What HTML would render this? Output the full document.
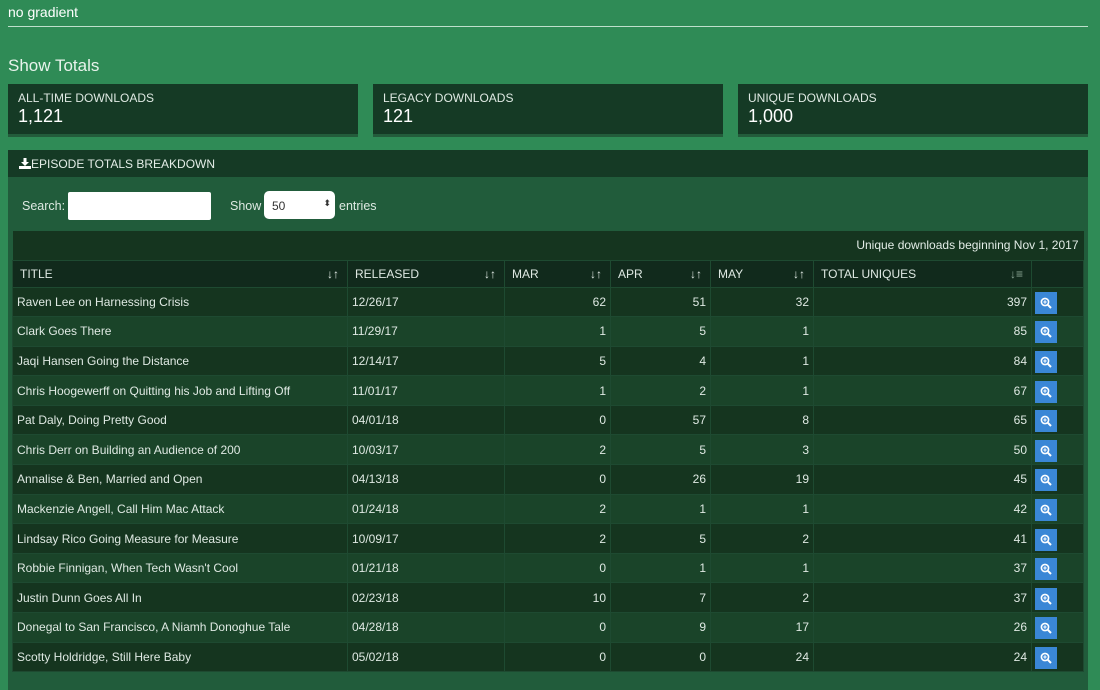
<!DOCTYPE html>
<html><head><meta charset="utf-8"><style>
*{box-sizing:border-box;margin:0;padding:0}
body{width:1100px;height:681px;overflow:hidden;background:#2f8b56;font-family:"Liberation Sans",sans-serif;color:#fff;position:relative}
.t{position:absolute;left:8px;top:4px;font-size:14px}
.hr{position:absolute;left:8px;top:26px;width:1080px;height:1px;background:#bfe0cc}
.st{position:absolute;left:8px;top:56px;font-size:17px;color:#e8f3ec}
.card{position:absolute;top:84px;height:50px;background:#153a25;box-shadow:0 3px 0 #235c3b;padding:7px 10px}
.card .l{font-size:12px;color:#dfe9e3}
.card .v{font-size:18px;margin-top:1px}
.panel{position:absolute;left:8px;top:150px;width:1080px;height:540px;background:#215c3b}
.ph{height:27px;background:#153a25;font-size:12px;padding:7px 11px;color:#e4ede7}
.ctrl{position:absolute;top:49px;font-size:12.5px;color:#dde9e2}
.inp{position:absolute;background:#fff;border-radius:2px}
table{position:absolute;left:4px;top:81px;width:1072px;border-collapse:collapse;font-size:12px;color:#dfe9e3}
td,th{border:1px solid #1e4a31;padding:0 4px;height:29.6px;font-weight:normal;text-align:left;white-space:nowrap}
tr.cap td{background:#173e28;text-align:right;height:29px;border:none;color:#e2ece6}
th{background:#112a1c;height:27px;position:relative;font-size:12px;padding:0 7px}
th span{position:absolute;right:8px;top:6px;font-size:12px;font-weight:bold}
tbody tr:nth-child(odd) td{background:#15351f}
tbody tr:nth-child(even) td{background:#1a4429}
td.n{text-align:right}
.b{display:inline-block;width:22px;height:22px;background:#3a87d6;vertical-align:middle;position:relative;top:1px;margin-left:-1px}
.b svg{position:absolute;left:5px;top:5px}
</style></head><body>
<div class="t">no gradient</div><div class="hr"></div>
<div class="st">Show Totals</div>
<div class="card" style="left:8px;width:350px"><div class="l">ALL-TIME DOWNLOADS</div><div class="v">1,121</div></div>
<div class="card" style="left:373px;width:350px"><div class="l">LEGACY DOWNLOADS</div><div class="v">121</div></div>
<div class="card" style="left:738px;width:350px"><div class="l">UNIQUE DOWNLOADS</div><div class="v">1,000</div></div>
<div class="panel">
<div class="ph"><svg width="12" height="11" viewBox="0 0 12 11" style="vertical-align:-1px"><path d="M4.5 0h3v4h2.5L6 8 2 4h2.5z" fill="#fff"/><rect x="0" y="8" width="12" height="3" fill="#fff"/></svg>EPISODE TOTALS BREAKDOWN</div>
<div class="ctrl" style="left:14px">Search:</div>
<div class="inp" style="left:60px;top:42px;width:143px;height:28px"></div>
<div class="ctrl" style="left:222px">Show</div>
<div class="inp" style="left:256px;top:41px;width:71px;height:28px;border-radius:5px;color:#333;font-size:12px;padding:8px 8px">50<span style="position:absolute;right:4px;top:7px;font-size:9px">&#x2B0D;</span></div>
<div class="ctrl" style="left:331px">entries</div>
<table>
<tr class="cap"><td colspan="7" style="padding-right:5px">Unique downloads beginning Nov 1, 2017</td></tr>
<tr><th style="width:335px">TITLE<span>&#8595;&#8593;</span></th><th style="width:157px">RELEASED<span>&#8595;&#8593;</span></th><th style="width:106px">MAR<span>&#8595;&#8593;</span></th><th style="width:100px">APR<span>&#8595;&#8593;</span></th><th style="width:103px">MAY<span>&#8595;&#8593;</span></th><th style="width:218px">TOTAL UNIQUES<span style="color:#8aa595">&#8595;&#8801;</span></th><th></th></tr>
<tbody>
<tr><td>Raven Lee on Harnessing Crisis</td><td>12/26/17</td><td class="n">62</td><td class="n">51</td><td class="n">32</td><td class="n">397</td><td><i class="b"></i></td></tr>
<tr><td>Clark Goes There</td><td>11/29/17</td><td class="n">1</td><td class="n">5</td><td class="n">1</td><td class="n">85</td><td><i class="b"></i></td></tr>
<tr><td>Jaqi Hansen Going the Distance</td><td>12/14/17</td><td class="n">5</td><td class="n">4</td><td class="n">1</td><td class="n">84</td><td><i class="b"></i></td></tr>
<tr><td>Chris Hoogewerff on Quitting his Job and Lifting Off</td><td>11/01/17</td><td class="n">1</td><td class="n">2</td><td class="n">1</td><td class="n">67</td><td><i class="b"></i></td></tr>
<tr><td>Pat Daly, Doing Pretty Good</td><td>04/01/18</td><td class="n">0</td><td class="n">57</td><td class="n">8</td><td class="n">65</td><td><i class="b"></i></td></tr>
<tr><td>Chris Derr on Building an Audience of 200</td><td>10/03/17</td><td class="n">2</td><td class="n">5</td><td class="n">3</td><td class="n">50</td><td><i class="b"></i></td></tr>
<tr><td>Annalise &amp; Ben, Married and Open</td><td>04/13/18</td><td class="n">0</td><td class="n">26</td><td class="n">19</td><td class="n">45</td><td><i class="b"></i></td></tr>
<tr><td>Mackenzie Angell, Call Him Mac Attack</td><td>01/24/18</td><td class="n">2</td><td class="n">1</td><td class="n">1</td><td class="n">42</td><td><i class="b"></i></td></tr>
<tr><td>Lindsay Rico Going Measure for Measure</td><td>10/09/17</td><td class="n">2</td><td class="n">5</td><td class="n">2</td><td class="n">41</td><td><i class="b"></i></td></tr>
<tr><td>Robbie Finnigan, When Tech Wasn't Cool</td><td>01/21/18</td><td class="n">0</td><td class="n">1</td><td class="n">1</td><td class="n">37</td><td><i class="b"></i></td></tr>
<tr><td>Justin Dunn Goes All In</td><td>02/23/18</td><td class="n">10</td><td class="n">7</td><td class="n">2</td><td class="n">37</td><td><i class="b"></i></td></tr>
<tr><td>Donegal to San Francisco, A Niamh Donoghue Tale</td><td>04/28/18</td><td class="n">0</td><td class="n">9</td><td class="n">17</td><td class="n">26</td><td><i class="b"></i></td></tr>
<tr><td>Scotty Holdridge, Still Here Baby</td><td>05/02/18</td><td class="n">0</td><td class="n">0</td><td class="n">24</td><td class="n">24</td><td><i class="b"></i></td></tr>
</tbody></table>
</div>
<script>
document.querySelectorAll('.b').forEach(function(b){b.innerHTML='<svg width="12" height="12" viewBox="0 0 12 12"><circle cx="5" cy="5" r="3.6" fill="none" stroke="#fff" stroke-width="1.6"/><path d="M7.6 7.6L11 11" stroke="#fff" stroke-width="2"/><path d="M3.3 5h3.4M5 3.3v3.4" stroke="#fff" stroke-width="1.1"/></svg>';});
</script>
</body></html>
